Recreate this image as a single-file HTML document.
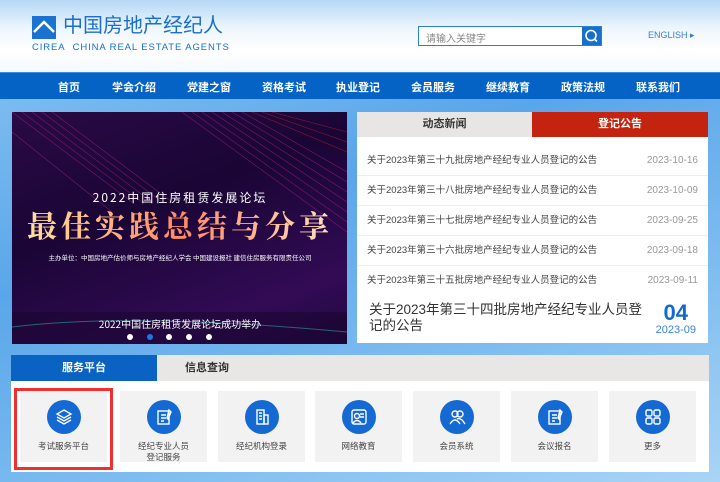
<!DOCTYPE html>
<html><head><meta charset="utf-8">
<style>
*{margin:0;padding:0;box-sizing:border-box}
body{width:720px;height:482px;overflow:hidden;font-family:"Liberation Sans","Noto Sans CJK SC",sans-serif;background:linear-gradient(160deg,#8cc6f2 0%,#5aa6ea 40%,#7dbcf0 70%,#a9d4f5 100%);position:relative}
.hdr{position:absolute;left:0;top:0;width:720px;height:72px;background:linear-gradient(#b6d8f6,#eef6fd 40%,#fff 70%,#f4f9fe)}
.logo{position:absolute;left:32px;top:16px;width:24px;height:23px;background:#1a73d0}
.cn{position:absolute;left:63px;top:13px;font-size:20px;color:#1a6fcc;line-height:26px;white-space:nowrap}
.en{position:absolute;left:32px;top:42px;font-size:9.5px;color:#1a6fcc;letter-spacing:0.9px;white-space:nowrap}
.search{position:absolute;left:418px;top:26px;width:184px;height:20px;border:1px solid #2a7fd6;background:#fff}
.search span{position:absolute;left:7px;top:3px;font-size:10px;color:#888}
.search b{position:absolute;right:0;top:0;width:19px;height:18px;background:#1a6fcc}
.eng{position:absolute;left:648px;top:30px;font-size:9px;color:#3a7fd0}
.nav{position:absolute;left:0;top:72px;width:720px;height:27px;background:#0563c5;border-top:1px solid #3b8ae0}
.nav span{position:absolute;top:6px;font-size:11px;font-weight:bold;color:#fff}
.ban{position:absolute;left:12px;top:112px;width:335px;height:232px;background:linear-gradient(160deg,#2a0a45,#1a0535 40%,#320b55 80%,#200840);overflow:hidden}
.news{position:absolute;left:357px;top:112px;width:351px;height:231px;background:#fff}
.tab1{position:absolute;left:0;top:0;width:175px;height:25px;background:#e8e6e4;font-size:11px;font-weight:bold;color:#333;text-align:center;line-height:25px}
.tab2{position:absolute;left:175px;top:0;width:176px;height:25px;background:#c3230f;font-size:11px;font-weight:bold;color:#fff;text-align:center;line-height:25px}
.row{position:absolute;left:0;width:351px;height:30px;border-bottom:1px solid #eee;font-size:9.5px;color:#444;line-height:14px}
.row span{position:absolute;left:10px;top:8px}
.row i{position:absolute;right:10px;top:8px;font-style:normal;color:#999;font-size:10px}
.big{position:absolute;left:12px;top:190px;width:280px;font-size:13.5px;color:#333;line-height:16px}
.d1{position:absolute;right:20px;top:188px;font-size:22px;font-weight:bold;color:#1269d3}
.d2{position:absolute;right:12px;top:212px;font-size:11px;color:#3b82dc}
.panel{position:absolute;left:11px;top:355px;width:698px;height:117px;background:#fff}
.pt{position:absolute;left:0;top:0;width:698px;height:26px;background:#e9e7e5}
.pt1{position:absolute;left:0;top:0;width:146px;height:26px;background:#0a62c2;color:#fff;font-weight:bold;font-size:11px;text-align:center;line-height:26px}
.pt2{position:absolute;left:146px;top:0;width:100px;height:26px;color:#333;font-weight:bold;font-size:11px;text-align:center;line-height:26px}
.tile{position:absolute;top:36px;width:87px;height:71px;background:#f2f2f2;text-align:center;font-size:8.5px;color:#444;line-height:11px}
.tile .c{width:34px;height:34px;border-radius:50%;background:#1469d2;margin:9px auto 7px;display:flex;align-items:center;justify-content:center}
.red{position:absolute;left:14px;top:388px;width:99px;height:82px;border:3px solid #f03030}
</style></head><body>
<div class="hdr">
<div class="logo"><svg width="24" height="23"><path d="M2 16 L12 6 L22 16" stroke="#fff" stroke-width="2.5" fill="none"/></svg></div>
<div class="cn">中国房地产经纪人</div>
<div class="en">CIREA&nbsp; CHINA REAL ESTATE AGENTS</div>
<div class="search"><span>请输入关键字</span><b><svg width="19" height="18"><circle cx="9" cy="8.5" r="5" stroke="#fff" stroke-width="1.6" fill="none"/><path d="M12.5 12 L15 14.5" stroke="#fff" stroke-width="1.6"/></svg></b></div>
<div class="eng">ENGLISH ▸</div>
</div>
<div class="nav">
<span style="left:58px">首页</span><span style="left:112px">学会介绍</span><span style="left:187px">党建之窗</span><span style="left:262px">资格考试</span><span style="left:336px">执业登记</span><span style="left:411px">会员服务</span><span style="left:486px">继续教育</span><span style="left:561px">政策法规</span><span style="left:636px">联系我们</span>
</div>
<div class="ban">
<svg width="335" height="232" style="position:absolute;left:0;top:0">
<defs><linearGradient id="g" x1="0" x2="1"><stop offset="0" stop-color="#ffe0a0"/><stop offset="0.5" stop-color="#ff8a60"/><stop offset="1" stop-color="#ffe0c0"/></linearGradient></defs>
<g stroke="#a0207a" stroke-width="0.6" opacity="0.7">
<path d="M0 0 L120 90"/><path d="M10 0 L130 90"/><path d="M20 0 L140 90"/><path d="M30 0 L150 90"/><path d="M40 0 L160 90"/><path d="M0 20 L100 100"/>
<path d="M335 60 L230 0"/><path d="M335 70 L220 0"/><path d="M335 80 L210 0"/><path d="M335 90 L200 0"/><path d="M335 100 L190 0"/><path d="M335 110 L180 0"/><path d="M335 120 L170 0"/>
</g>
<g stroke="#d02030" stroke-width="0.6" opacity="0.6"><path d="M335 20 L260 0"/><path d="M335 30 L250 0"/><path d="M335 40 L240 0"/></g>
<rect x="0" y="200" width="335" height="32" fill="#1a0530" opacity="0.6"/>
<path d="M0 215 Q120 200 335 220" stroke="#30a0a0" stroke-width="1" fill="none" opacity="0.6"/>
<text x="168" y="90" font-size="12" fill="#fff" text-anchor="middle" letter-spacing="2" font-family="Noto Sans CJK SC">2022中国住房租赁发展论坛</text>
<text x="168" y="125" font-size="30" fill="url(#g)" text-anchor="middle" letter-spacing="4" font-family="Noto Serif CJK SC" font-weight="bold">最佳实践总结与分享</text>
<text x="168" y="148" font-size="6.5" fill="#fff" text-anchor="middle" font-family="Noto Sans CJK SC">主办单位：中国房地产估价师与房地产经纪人学会  中国建设报社  建信住房服务有限责任公司</text>
<text x="168" y="216" font-size="10" fill="#fff" text-anchor="middle" font-family="Noto Sans CJK SC">2022中国住房租赁发展论坛成功举办</text>
<circle cx="118" cy="225" r="3" fill="#fff"/><circle cx="138" cy="225" r="3" fill="#1a7ae0"/><circle cx="157" cy="225" r="3" fill="#fff"/><circle cx="177" cy="225" r="3" fill="#fff"/><circle cx="197" cy="225" r="3" fill="#fff"/>
</svg>
</div>
<div class="news">
<div class="tab1">动态新闻</div><div class="tab2">登记公告</div>
<div class="row" style="top:34px"><span>关于2023年第三十九批房地产经纪专业人员登记的公告</span><i>2023-10-16</i></div>
<div class="row" style="top:64px"><span>关于2023年第三十八批房地产经纪专业人员登记的公告</span><i>2023-10-09</i></div>
<div class="row" style="top:94px"><span>关于2023年第三十七批房地产经纪专业人员登记的公告</span><i>2023-09-25</i></div>
<div class="row" style="top:124px"><span>关于2023年第三十六批房地产经纪专业人员登记的公告</span><i>2023-09-18</i></div>
<div class="row" style="top:154px;border:none"><span>关于2023年第三十五批房地产经纪专业人员登记的公告</span><i>2023-09-11</i></div>
<div class="big">关于2023年第三十四批房地产经纪专业人员登记的公告</div>
<div class="d1">04</div><div class="d2">2023-09</div>
</div>
<div class="panel">
<div class="pt"><div class="pt1">服务平台</div><div class="pt2">信息查询</div></div>
<div class="tile" style="left:9px"><div class="c"><svg width="20" height="20" fill="none" stroke="#fff" stroke-width="1.4"><path d="M10 3 L17 7 L10 11 L3 7Z"/><path d="M3 10 L10 14 L17 10"/><path d="M3 13 L10 17 L17 13"/></svg></div>考试服务平台</div>
<div class="tile" style="left:109px"><div class="c"><svg width="20" height="20" fill="none" stroke="#fff" stroke-width="1.4"><rect x="4" y="4" width="11" height="13"/><path d="M7 8h5M7 11h5M7 14h3"/><path d="M15 3 L17 5 L14 12 L13 11Z"/></svg></div>经纪专业人员<br>登记服务</div>
<div class="tile" style="left:207px"><div class="c"><svg width="20" height="20" fill="none" stroke="#fff" stroke-width="1.4"><rect x="5" y="3" width="7" height="14"/><rect x="12" y="8" width="4" height="9"/><path d="M7 6h3M7 9h3M7 12h3"/></svg></div>经纪机构登录</div>
<div class="tile" style="left:304px"><div class="c"><svg width="20" height="20" fill="none" stroke="#fff" stroke-width="1.4"><rect x="3" y="3" width="14" height="14" rx="2"/><circle cx="8" cy="9" r="2.5"/><path d="M4 16 Q8 11 12 16M11 7h4M11 10h4"/></svg></div>网络教育</div>
<div class="tile" style="left:402px"><div class="c"><svg width="20" height="20" fill="none" stroke="#fff" stroke-width="1.4"><circle cx="8" cy="7" r="3"/><circle cx="13" cy="7" r="3"/><path d="M3 17 Q8 9 13 17M10 12 Q14 10 18 17"/></svg></div>会员系统</div>
<div class="tile" style="left:500px"><div class="c"><svg width="20" height="20" fill="none" stroke="#fff" stroke-width="1.4"><rect x="4" y="4" width="11" height="13"/><path d="M7 8h5M7 11h5M7 14h3"/><path d="M15 3 L17 5 L14 12 L13 11Z"/></svg></div>会议报名</div>
<div class="tile" style="left:598px"><div class="c"><svg width="20" height="20" fill="none" stroke="#fff" stroke-width="1.4"><rect x="3" y="3" width="6" height="6" rx="1.5"/><rect x="11" y="3" width="6" height="6" rx="1.5"/><rect x="3" y="11" width="6" height="6" rx="1.5"/><rect x="11" y="11" width="6" height="6" rx="1.5"/></svg></div>更多</div>
</div>
<div class="red"></div>
</body></html>
